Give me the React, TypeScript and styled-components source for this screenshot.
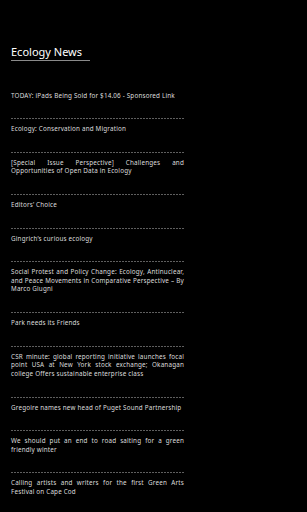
import React from 'react'
import styled, { createGlobalStyle } from 'styled-components'

const GlobalStyle = createGlobalStyle`
    html, body {
        margin: 0;
        padding: 0;
        background: #000;
    }
`

const Page = styled.div`
    width: 307px;
    min-height: 512px;
    background: #000;
    padding: 39px 0 0 11px;
    box-sizing: border-box;
    font-family: 'Noto Sans', 'Open Sans', sans-serif;
`

const Title = styled.h1`
    display: inline-block;
    margin: 0;
    padding: 0 8px 1px 0;
    font-size: 11px;
    line-height: 14px;
    font-weight: normal;
    color: #fff;
    border-bottom: 1px solid #8a8a8a;
`

const NewsList = styled.div`
    display: flex;
    flex-direction: column;
    width: 173px;
    margin-top: 30.5px;
`

const NewsItem = styled.div`
    padding: 0 0 18.2px;
    font-size: 6.3px;
    letter-spacing: 0.18px;
    line-height: 8.5px;
    color: #dcdcdc;
    text-align: justify;
`

const Separator = styled.div`
    height: 1px;
    margin-bottom: 6px;
    background: repeating-linear-gradient(to right, #5e5e5e 0 2px, transparent 2px 3px);
`

const headlines = [
    'TODAY: iPads Being Sold for $14.06 - Sponsored Link',
    'Ecology: Conservation and Migration',
    '[Special Issue Perspective] Challenges and Opportunities of Open Data in Ecology',
    'Editors\u2019 Choice',
    'Gingrich\u2019s curious ecology',
    'Social Protest and Policy Change: Ecology, Antinuclear, and Peace Movements in Comparative Perspective \u2013 By Marco Giugni',
    'Park needs its Friends',
    'CSR minute: global reporting initiative launches focal point USA at New York stock exchange; Okanagan college Offers sustainable enterprise class',
    'Gregoire names new head of Puget Sound Partnership',
    'We should put an end to road salting for a green friendly winter',
    'Calling artists and writers for the first Green Arts Festival on Cape Cod',
]

const App = () => {
    return (
        <Page>
            <GlobalStyle />
            <Title>Ecology News</Title>
            <NewsList>
                {headlines.map((headline, i) => (
                    <React.Fragment key={headline}>
                        {i > 0 && <Separator />}
                        <NewsItem>{headline}</NewsItem>
                    </React.Fragment>
                ))}
            </NewsList>
        </Page>
    )
}

export default App
